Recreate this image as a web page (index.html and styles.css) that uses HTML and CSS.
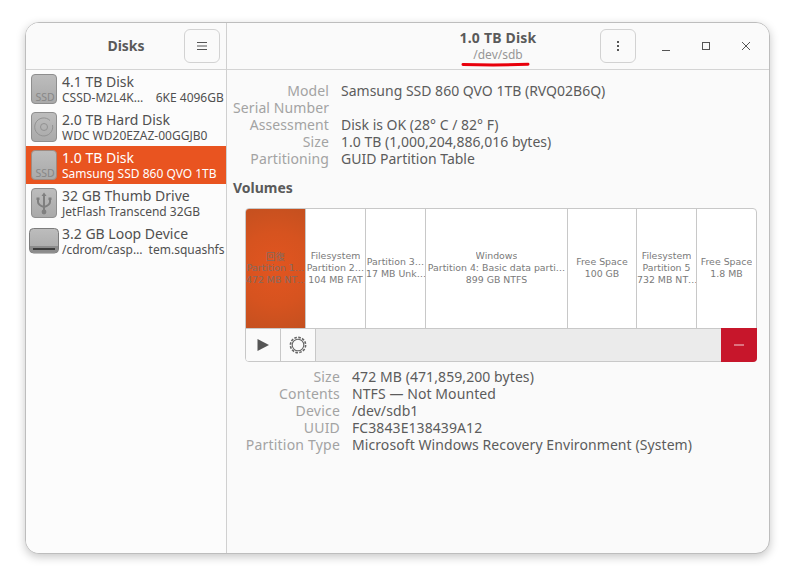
FILE: index.html

```html
<!DOCTYPE html>
<html lang="en">
<head>
  <meta charset="UTF-8">
  <title>Disks</title>
  <link rel="stylesheet" href="styles.css">
</head>
<body>

<svg class="defs" width="0" height="0">
  <defs>
    <linearGradient id="driveFill" x1="0" y1="0" x2="0" y2="1">
      <stop offset="0" stop-color="#bdbdbd"/>
      <stop offset="1" stop-color="#a9a9a9"/>
    </linearGradient>
  </defs>
</svg>

<div class="window">

  <aside class="sidebar">
    <header class="bar">
      <span></span>
      <h1 class="bar-title">Disks</h1>
      <button class="bar-btn">
        <svg width="12" height="10" viewBox="0 0 12 10"><path d="M1 1.500h10M1 5h10M1 8.500h10" stroke="#555" fill="none"/></svg>
      </button>
    </header>
    <ul class="disk-list">
      <li class="disk">
        <svg class="disk-icon" width="34" height="32" viewBox="0 0 34 32">
          <rect x="4.500" y="1.500" width="25" height="29" rx="3.500" fill="url(#driveFill)" stroke="#8e8e8e"/>
          <text x="18" y="28" class="ssd-label">SSD</text>
        </svg>
        <div class="disk-text">
          <div class="disk-name">4.1 TB Disk</div>
          <div class="disk-model">CSSD-M2L4K…    6KE 4096GB</div>
        </div>
      </li>
      <li class="disk">
        <svg class="disk-icon" width="34" height="32" viewBox="0 0 34 32">
          <rect x="4.500" y="1.500" width="25" height="29" rx="3.500" fill="url(#driveFill)" stroke="#8e8e8e"/>
          <path d="M23 9.500A9 9 0 1 0 25.500 14" fill="none" stroke="#929292"/>
          <circle cx="17" cy="16" r="3.500" fill="none" stroke="#929292"/>
        </svg>
        <div class="disk-text">
          <div class="disk-name">2.0 TB Hard Disk</div>
          <div class="disk-model">WDC WD20EZAZ-00GGJB0</div>
        </div>
      </li>
      <li class="disk selected">
        <svg class="disk-icon" width="34" height="32" viewBox="0 0 34 32">
          <rect x="4.500" y="1.500" width="25" height="29" rx="3.500" fill="url(#driveFill)" stroke="#a08a80"/>
          <text x="18" y="28" class="ssd-label">SSD</text>
        </svg>
        <div class="disk-text">
          <div class="disk-name">1.0 TB Disk</div>
          <div class="disk-model">Samsung SSD 860 QVO 1TB</div>
        </div>
      </li>
      <li class="disk">
        <svg class="disk-icon" width="34" height="32" viewBox="0 0 34 32">
          <rect x="4.500" y="1.500" width="25" height="29" rx="3.500" fill="url(#driveFill)" stroke="#8e8e8e"/>
          <path d="M17 8v17M11 12v3q0 3 6 5M23 12v3q0 3-6 5" fill="none" stroke="#7f7f7f" stroke-width="2"/>
          <path d="M14.500 9l2.500-3.500L19.500 9z" fill="#7f7f7f"/>
          <path d="M9.500 10.500h3v2.500h-3zM21.500 10.500h3v2.500h-3z" fill="#7f7f7f"/>
          <circle cx="17" cy="25" r="2.400" fill="#7f7f7f"/>
        </svg>
        <div class="disk-text">
          <div class="disk-name">32 GB Thumb Drive</div>
          <div class="disk-model">JetFlash Transcend 32GB</div>
        </div>
      </li>
      <li class="disk">
        <svg class="disk-icon" width="34" height="32" viewBox="0 0 34 32">
          <rect x="2.500" y="3.500" width="29" height="24.500" rx="4" fill="url(#driveFill)" stroke="#7c7c7c"/>
          <path d="M3 21h28v3a3.500 3.500 0 0 1-3.500 3.500h-21A3.500 3.500 0 0 1 3 24z" fill="#8c8c8c"/>
          <path d="M6 24h22" stroke="#3c3c3c" stroke-width="2"/>
        </svg>
        <div class="disk-text">
          <div class="disk-name">3.2 GB Loop Device</div>
          <div class="disk-model">/cdrom/casp…  tem.squashfs</div>
        </div>
      </li>
    </ul>
  </aside>

  <main class="main">
    <header class="bar">
      <span></span>
      <div class="title-block">
        <h2 class="bar-title">1.0 TB Disk</h2>
        <div class="bar-sub">/dev/sdb</div>
        <svg class="red-mark" width="70" height="5" viewBox="0 0 70 5"><path d="M2 2.500c20 .6 44 .6 65-.2" stroke="#e8000b" stroke-width="3" fill="none" stroke-linecap="round"/></svg>
      </div>
      <div class="bar-right">
        <button class="bar-btn">
          <svg width="4" height="12" viewBox="0 0 4 12"><path d="M2 1v2M2 5v2M2 9v2" stroke="#555" stroke-width="2" fill="none"/></svg>
        </button>
        <div class="win-controls">
          <svg width="12" height="12" viewBox="0 0 12 12"><path d="M2 10.500h8" stroke="#555" fill="none"/></svg>
          <svg width="12" height="12" viewBox="0 0 12 12"><rect x="2.500" y="2.500" width="7" height="7" stroke="#555" fill="none"/></svg>
          <svg width="12" height="12" viewBox="0 0 12 12"><path d="M2 2l8 8M10 2l-8 8" stroke="#555" fill="none"/></svg>
        </div>
      </div>
    </header>

    <div class="content">
      <dl class="props props-disk">
        <dt>Model</dt><dd>Samsung SSD 860 QVO 1TB (RVQ02B6Q)</dd>
        <dt>Serial Number</dt><dd></dd>
        <dt>Assessment</dt><dd>Disk is OK (28° C / 82° F)</dd>
        <dt>Size</dt><dd>1.0 TB (1,000,204,886,016 bytes)</dd>
        <dt>Partitioning</dt><dd>GUID Partition Table</dd>
      </dl>

      <h3 class="volumes-title">Volumes</h3>

      <div class="volumes">
        <div class="partitions">
          <div class="part part-first w60">
            <span>回復</span><span>Partition 1…</span><span>472 MB NT…</span>
          </div>
          <div class="part w60">
            <span>Filesystem</span><span>Partition 2…</span><span>104 MB FAT</span>
          </div>
          <div class="part w60">
            <span>Partition 3…</span><span>17 MB Unk…</span>
          </div>
          <div class="part w142">
            <span>Windows</span><span>Partition 4: Basic data parti…</span><span>899 GB NTFS</span>
          </div>
          <div class="part w69">
            <span>Free Space</span><span>100 GB</span>
          </div>
          <div class="part w60">
            <span>Filesystem</span><span>Partition 5</span><span>732 MB NT…</span>
          </div>
          <div class="part part-last">
            <span>Free Space</span><span>1.8 MB</span>
          </div>
        </div>
        <div class="vol-toolbar">
          <button class="tool-btn">
            <svg width="14" height="14" viewBox="0 0 14 14"><path d="M1.500 1v12L13 7z" fill="#555"/></svg>
          </button>
          <button class="tool-btn">
            <svg width="20" height="20" viewBox="0 0 20 20">
              <circle cx="10" cy="10" r="5.800" fill="none" stroke="#666" stroke-width="1.100"/>
              <circle cx="10" cy="10" r="7.600" fill="none" stroke="#666" stroke-width="1.600" stroke-dasharray="2.600 1.380"/>
            </svg>
          </button>
          <span class="tool-fill"></span>
          <button class="tool-delete">
            <svg width="10" height="2" viewBox="0 0 10 2"><path d="M0 1h10" stroke="#f3d0d4" fill="none"/></svg>
          </button>
        </div>
      </div>

      <dl class="props props-vol">
        <dt>Size</dt><dd>472 MB (471,859,200 bytes)</dd>
        <dt>Contents</dt><dd>NTFS — Not Mounted</dd>
        <dt>Device</dt><dd>/dev/sdb1</dd>
        <dt>UUID</dt><dd>FC3843E138439A12</dd>
        <dt>Partition Type</dt><dd>Microsoft Windows Recovery Environment (System)</dd>
      </dl>
    </div>
  </main>

</div>

</body>
</html>
```

FILE: styles.css

```css
* { box-sizing: border-box; }
html, body { margin: 0; height: 100%; }
body { background: #fff; padding: 22px 25px 28px; font-family: "Noto Sans", sans-serif; font-size: 14px; color: #4f4f4f; overflow: hidden; }
.defs { position: absolute; }

.window { display: flex; height: 532px; background: #fafafa; border: 1px solid #bdbdbd; border-radius: 14px; box-shadow: 0 3px 10px rgba(0,0,0,.22); overflow: hidden; }

.sidebar { width: 201px; flex: none; background: #fcfcfc; border-right: 1px solid #d0d0d0; }
.main { flex: 1; min-width: 0; }

.bar { display: grid; grid-template-columns: 1fr auto 1fr; align-items: center; height: 47px; border-bottom: 1px solid #d4d4d4; background: #fafafa; }
.bar-title { margin: 0; font-size: 14px; font-weight: 700; line-height: 16px; color: #5a5a5a; }
.main .bar-title { letter-spacing: .2px; }
.bar-sub { margin-top: 1px; font-size: 12px; line-height: 15px; color: #969696; text-align: center; }
.bar-btn { width: 36px; height: 34px; padding: 0; display: flex; align-items: center; justify-content: center; background: #fafafa; border: 1px solid #d2d2d2; border-radius: 6px; }
.sidebar .bar-btn { justify-self: end; margin-right: 6px; }

.title-block { position: relative; text-align: center; }
.red-mark { position: absolute; left: 1px; bottom: -5px; }

.bar-right { display: flex; justify-content: flex-end; align-items: center; }
.win-controls { display: flex; gap: 28px; margin-left: 24px; margin-right: 17px; }

.disk-list { list-style: none; margin: 0; padding: 0; }
.disk { display: flex; align-items: center; height: 38px; gap: 1px; padding-left: 1px; color: #505050; }
.disk-icon { flex: none; }
.disk-text { min-width: 0; }
.disk-name { font-size: 14px; line-height: 17px; white-space: pre; }
.disk-model { font-size: 12px; line-height: 15px; white-space: pre; }
.disk.selected { background: #e95420; color: #fff; }
.ssd-label { font-family: "Noto Sans", sans-serif; font-size: 10.500px; fill: #878787; text-anchor: middle; }

.content { padding: 12px 12px 0 6px; }

.props { display: grid; column-gap: 12px; margin: 0; line-height: 17px; }
.props dt { text-align: right; color: #a3a3a3; white-space: nowrap; letter-spacing: .1px; }
.props dd { margin: 0; color: #5c5c5c; }
.props-disk { grid-template-columns: 96px 1fr; }
.props-vol { grid-template-columns: 95px 1fr; margin: 6px 0 0 12px; letter-spacing: .08px; }
.props-vol dt { letter-spacing: .2px; }

.volumes-title { margin: 12px 0 12px; font-size: 14px; line-height: 17px; font-weight: 700; color: #5a5a5a; }

.volumes { margin-left: 12px; background: #fff; border: 1px solid #c8c8c8; border-radius: 4px; }
.partitions { display: flex; height: 120px; padding: 0; border-bottom: 1px solid #c8c8c8; border-radius: 3px 3px 0 0; overflow: hidden; }
.part { flex: none; display: flex; flex-direction: column; justify-content: center; align-items: center; min-width: 0; padding-bottom: 1px; overflow: hidden; border-right: 1px solid #c8c8c8; font-family: "DejaVu Sans", sans-serif; font-size: 9.400px; line-height: 12px; color: #7a7a7a; }
.part span { max-width: 100%; white-space: nowrap; overflow: hidden; }
.part-first { background: radial-gradient(circle at center, #e25520 0%, #d6531f 55%, #c4501f 100%); color: #846a60; }
.part-first span:first-child { font-family: "Noto Sans CJK JP", sans-serif; }
.part-last { flex: 1; border-right: none; }
.w60 { width: 60px; }
.w69 { width: 69px; }
.w142 { width: 142px; }

.vol-toolbar { display: flex; height: 32px; background: #ebebeb; border-radius: 0 0 3px 3px; }
.tool-btn { width: 35px; padding: 0; display: flex; align-items: center; justify-content: center; background: #fafafa; border: none; border-right: 1px solid #c8c8c8; }
.tool-btn:first-child { border-bottom-left-radius: 3px; }
.tool-fill { flex: 1; }
.tool-delete { width: 36px; margin: -1px -1px -1px 0; padding: 0; display: flex; align-items: center; justify-content: center; background: #c7162b; border: none; border-bottom-right-radius: 4px; }
```
